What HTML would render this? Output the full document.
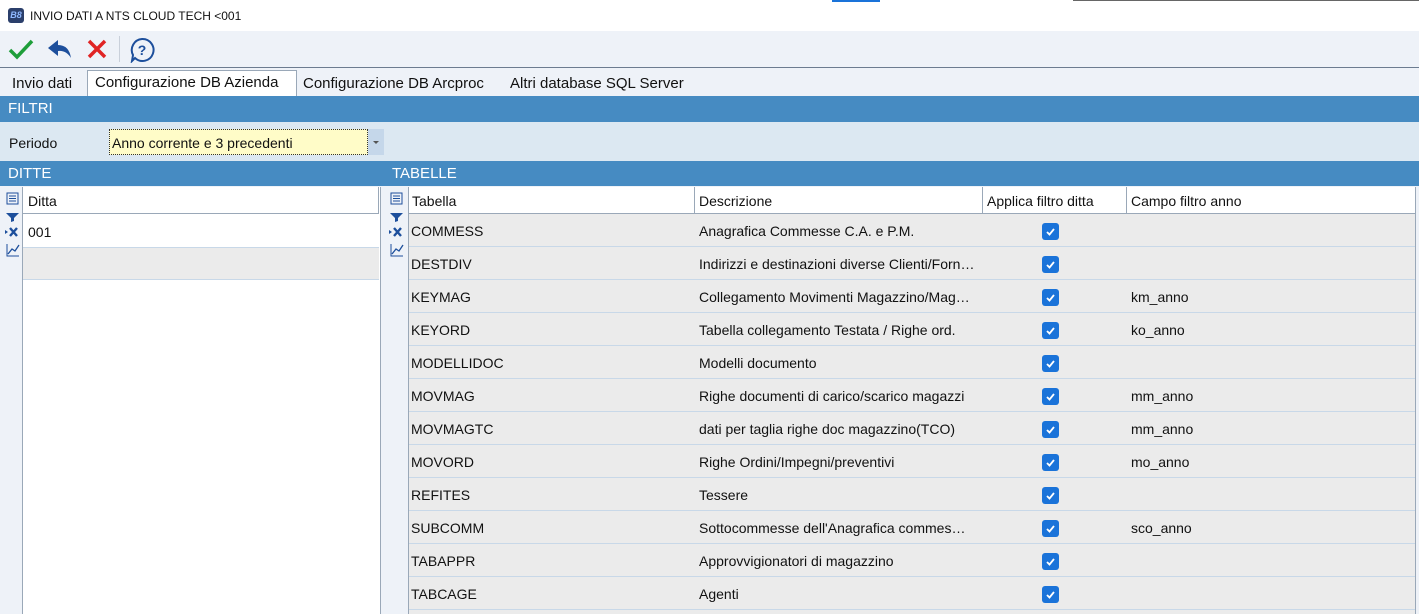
<!DOCTYPE html>
<html><head><meta charset="utf-8"><style>
*{margin:0;padding:0;box-sizing:border-box}
body{width:1419px;height:614px;overflow:hidden;background:#fff;font-family:"Liberation Sans",Tahoma,sans-serif;font-size:14px;color:#111;position:relative}
.a{position:absolute}
.hdr{background:#468bc2;color:#fff;font-size:15px;padding-left:8px;line-height:26px}
.cell{position:absolute;white-space:nowrap;line-height:33px;font-size:14px;top:1px}
.cb{position:absolute;width:17px;height:17px;background:#1a73d9;border-radius:3px}
.cb svg{position:absolute;left:2px;top:2px}
</style></head><body>
<div class="a" style="left:832px;top:0;width:48px;height:2px;background:#1a73d9"></div>
<div class="a" style="left:1073px;top:0;width:346px;height:1px;background:#666"></div>
<div class="a" style="left:8px;top:8px;width:16px;height:15px;background:#2b3f6b;border-radius:3px;color:#8fb8ff;font-size:9px;font-style:italic;font-weight:bold;line-height:15px;text-align:center">B8</div>
<div class="a" style="left:30px;top:8px;font-size:12px;line-height:16px">INVIO DATI A NTS CLOUD TECH &lt;001</div>
<div class="a" style="left:0;top:31px;width:1419px;height:65px;background:#eef2f8"></div>
<div class="a" style="left:0;top:67px;width:1419px;height:1px;background:#6c7c90"></div>
<svg class="a" style="left:8px;top:37px" width="26" height="24"><path d="M2 13 L9 20 L24 4" stroke="#1e9e3a" stroke-width="3.5" fill="none"/></svg>
<svg class="a" style="left:46px;top:38px" width="28" height="22"><path d="M12 2 L2 10 L12 18 L12 13 Q20 12 25 20 Q23 7 12 7 Z" fill="#1d4f9c"/></svg>
<svg class="a" style="left:86px;top:38px" width="22" height="22"><path d="M3 3 L19 19 M19 3 L3 19" stroke="#e02424" stroke-width="3.5"/></svg>
<div class="a" style="left:119px;top:36px;width:1px;height:26px;background:#c9d0da"></div>
<svg class="a" style="left:129px;top:37px" width="26" height="26"><path d="M13 2 A11 11 0 1 1 6 21 L3 24 L4 18 A11 11 0 0 1 13 2Z" fill="none" stroke="#1d4f9c" stroke-width="2"/><text x="13" y="18" font-size="14" font-weight="bold" fill="#1d4f9c" text-anchor="middle" font-family="Liberation Sans">?</text></svg>
<div class="a" style="left:12px;top:75px;font-size:15px">Invio dati</div>
<div class="a" style="left:87px;top:70px;width:210px;height:27px;background:#fff;border:1px solid #9aa8b8;border-bottom:none"></div>
<div class="a" style="left:95px;top:74px;font-size:15px">Configurazione DB Azienda</div>
<div class="a" style="left:303px;top:75px;font-size:15px">Configurazione DB Arcproc</div>
<div class="a" style="left:510px;top:75px;font-size:15px">Altri database SQL Server</div>
<div class="a hdr" style="left:0;top:96px;width:1419px;height:26px">FILTRI</div>
<div class="a" style="left:0;top:122px;width:1419px;height:39px;background:#dce8f2"></div>
<div class="a" style="left:9px;top:135px">Periodo</div>
<div class="a" style="left:109px;top:129px;width:259px;height:26px;background:#fffcc8;border:1px dotted #333"></div>
<div class="a" style="left:112px;top:135px">Anno corrente e 3 precedenti</div>
<div class="a" style="left:368px;top:129px;width:16px;height:26px;background:#c5d7ea"></div>
<div class="a" style="left:373px;top:141px;border:3px solid transparent;border-top:3px solid #555"></div>
<div class="a hdr" style="left:0;top:161px;width:1419px;height:25px;line-height:25px">DITTE</div>
<div class="a" style="left:392px;top:161px;color:#fff;line-height:25px;font-size:15px">TABELLE</div>
<div class="a" style="left:0;top:186px;width:1419px;height:428px;background:#eef2f8"></div>
<div class="a" style="left:22px;top:187px;width:359px;height:427px;background:#fff;border-left:1px solid #9aa8b8;border-right:1px solid #9aa8b8"></div>
<div class="a" style="left:23px;top:213px;width:356px;height:1px;background:#9aa8b8"></div>
<div class="a" style="left:378px;top:187px;width:1px;height:27px;background:#9aa8b8"></div>
<div class="a" style="left:28px;top:193px">Ditta</div>
<div class="a" style="left:28px;top:224px">001</div>
<div class="a" style="left:23px;top:247px;width:356px;height:33px;background:#ebebeb;border-top:1px solid #c8d8e8;border-bottom:1px solid #c8d8e8"></div>
<div class="a" style="left:408px;top:187px;width:1008px;height:427px;background:#ebebeb;border-left:1px solid #9aa8b8"></div>
<div class="a" style="left:409px;top:187px;width:1007px;height:27px;background:#fff;border-bottom:1px solid #9aa8b8"></div>
<div class="a" style="left:694px;top:187px;width:1px;height:27px;background:#9aa8b8"></div>
<div class="a" style="left:982px;top:187px;width:1px;height:27px;background:#9aa8b8"></div>
<div class="a" style="left:1126px;top:187px;width:1px;height:27px;background:#9aa8b8"></div>
<div class="a" style="left:1415px;top:187px;width:1px;height:427px;background:#9aa8b8"></div>
<div class="a" style="left:412px;top:193px">Tabella</div>
<div class="a" style="left:699px;top:193px">Descrizione</div>
<div class="a" style="left:987px;top:193px">Applica filtro ditta</div>
<div class="a" style="left:1131px;top:193px">Campo filtro anno</div>
<svg width="0" height="0" style="position:absolute"><defs>
<g id="ic"><rect x="2" y="1" width="11" height="11" fill="none" stroke="#1d4f9c"/><path d="M4 4h7M4 6.5h7M4 9h7" stroke="#1d4f9c"/>
<path d="M1 21h13l-5 5v3l-3 1v-4z" fill="#1d4f9c"/>
<path d="M5 36l7 8M12 36l-7 8" stroke="#1d4f9c" stroke-width="2.4"/><path d="M0 38l3 2-3 2z" fill="#1d4f9c"/>
<path d="M2 52v12h12" fill="none" stroke="#1d4f9c"/><path d="M3 62l4-5 3 2 4-6" fill="none" stroke="#1d4f9c" stroke-width="1.3"/></g></defs></svg>
<svg class="a" style="left:5px;top:192px" width="16" height="66"><use href="#ic"/></svg>
<svg class="a" style="left:389px;top:192px" width="16" height="66"><use href="#ic"/></svg>
<div id="rows"></div>
<script>
var d=[["COMMESS","Anagrafica Commesse C.A. e P.M.",""],["DESTDIV","Indirizzi e destinazioni diverse Clienti/Forn…",""],["KEYMAG","Collegamento Movimenti Magazzino/Mag…","km_anno"],["KEYORD","Tabella collegamento Testata / Righe ord.","ko_anno"],["MODELLIDOC","Modelli documento",""],["MOVMAG","Righe documenti di carico/scarico magazzi","mm_anno"],["MOVMAGTC","dati per taglia righe doc magazzino(TCO)","mm_anno"],["MOVORD","Righe Ordini/Impegni/preventivi","mo_anno"],["REFITES","Tessere",""],["SUBCOMM","Sottocommesse dell'Anagrafica commes…","sco_anno"],["TABAPPR","Approvvigionatori di magazzino",""],["TABCAGE","Agenti",""]];
var h="";d.forEach(function(r,i){var y=214+i*33;
h+='<div class="a" style="left:409px;top:'+(y+32)+'px;width:1006px;height:1px;background:#c8d8e8"></div>';
h+='<div class="cell" style="left:411px;top:'+(y+1)+'px">'+r[0]+'</div><div class="cell" style="left:699px;top:'+(y+1)+'px">'+r[1]+'</div><div class="cell" style="left:1131px;top:'+(y+1)+'px">'+r[2]+'</div>';
h+='<div class="cb" style="left:1042px;top:'+(y+9)+'px"><svg width="13" height="13"><path d="M3 7l2.5 2.5L10 4" stroke="#fff" stroke-width="1.8" fill="none"/></svg></div>';});
document.getElementById("rows").innerHTML=h;
</script>
</body></html>
